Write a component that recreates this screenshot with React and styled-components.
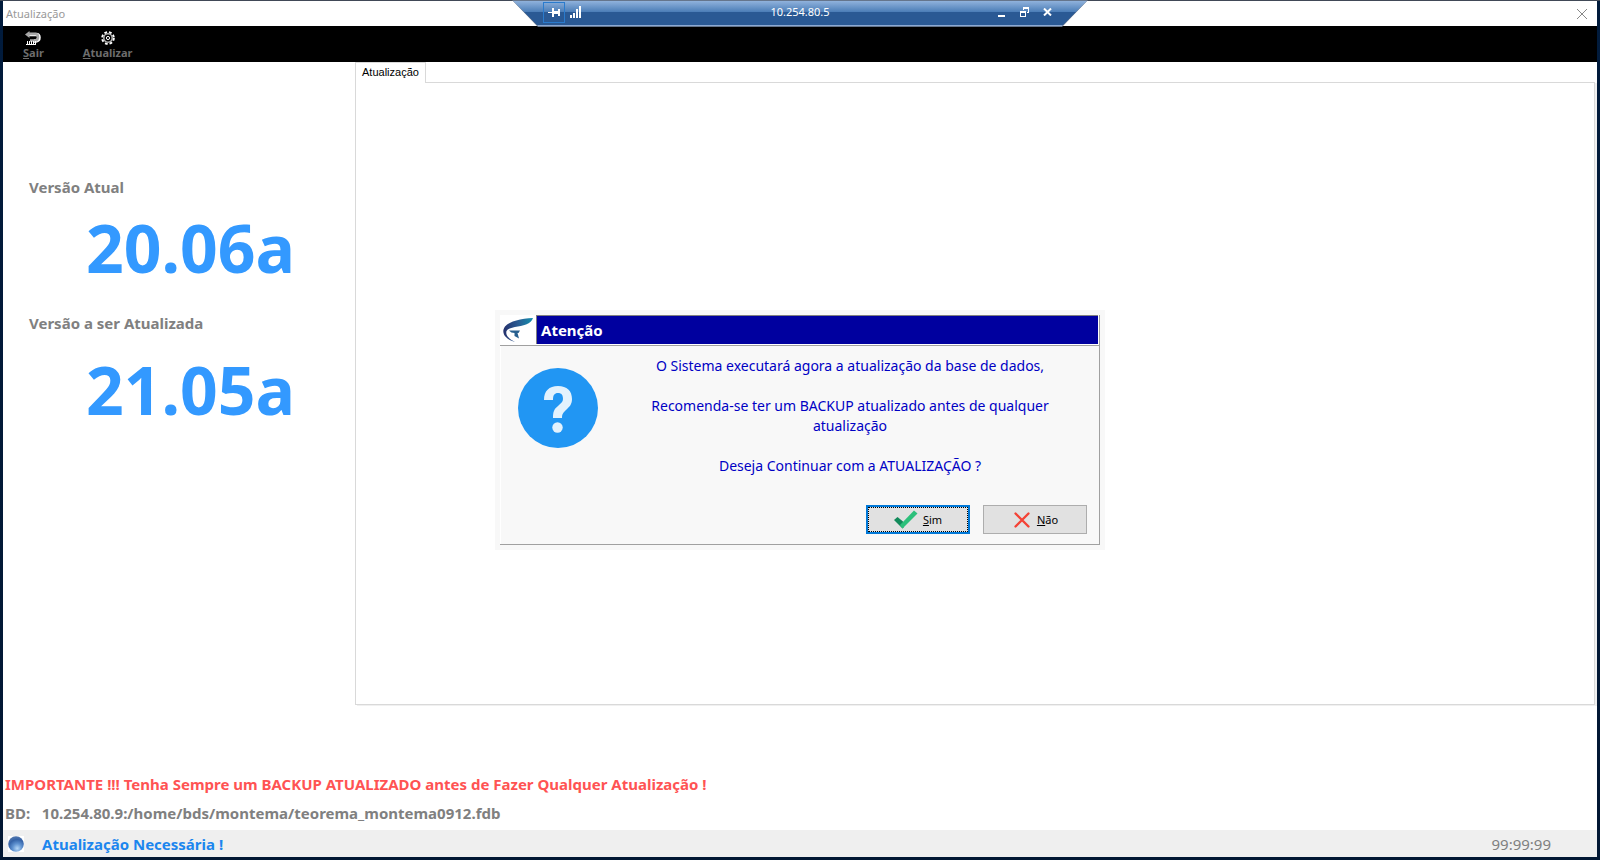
import React from 'react';
import styled, { createGlobalStyle, css } from 'styled-components';

const Global = createGlobalStyle`
  * { box-sizing: border-box; }
  body { margin: 0; background: #01183a; font-family: "Noto Sans", "Open Sans", sans-serif; }
  button { font-family: inherit; }
`;

const Desktop = styled.div`
  min-height: 100vh;
  padding: 1px 3px 3px;
  display: flex;
  background: linear-gradient(#414957 0 1px, #011b3c 1px, #021733);
`;

const Window = styled.main`
  flex: 1;
  min-width: 0;
  display: flex;
  flex-direction: column;
  background: #fff;
`;

const TitleBar = styled.header`
  height: 25px;
  padding: 0 10px 0 3px;
  display: flex;
  align-items: center;
  justify-content: space-between;
  color: #999;
`;

const WindowTitle = styled.h1`
  margin: 0;
  font-size: 11px;
  line-height: 24px;
  font-weight: 400;
`;

const IconButton = styled.button`
  border: 0;
  padding: 0;
  background: none;
  color: inherit;
  display: flex;
  align-items: center;
  justify-content: center;
`;

const Remote = styled.div`
  position: absolute;
  top: 0;
  left: 50%;
  transform: translateX(-50%);
  width: 576px;
  height: 27px;
  padding: 1px;
  background: #65758c;
  clip-path: polygon(0 0, 100% 0, calc(100% - 26px) 100%, 26px 100%);
`;

const RemoteBar = styled.div`
  height: 25px;
  padding: 0 30px 2px;
  display: grid;
  grid-template-columns: 1fr auto 1fr;
  align-items: center;
  color: #fff;
  font-size: 11px;
  line-height: 22px;
  border-bottom: 1px solid #8ba9d4;
  background: linear-gradient(#90b2dc 0, #4b7db7 11px, #2a5994 11px);
  clip-path: polygon(0 0, 100% 0, calc(100% - 25px) 100%, 25px 100%);
`;

const RemoteTools = styled.div`
  display: flex;
  align-items: center;
  justify-content: ${(p) => (p.$end ? 'flex-end' : 'flex-start')};
  gap: ${(p) => (p.$end ? '14px' : '5px')};
  padding-right: ${(p) => (p.$end ? '5px' : '0')};
`;

const PinButton = styled(IconButton)`
  width: 22px;
  height: 21px;
  border: 1px solid #2a7bcd;
`;

const ToolBar = styled.nav`
  height: 36px;
  padding: 5px 20px 0;
  display: flex;
  align-items: flex-start;
  gap: 39px;
  background: #000;
`;

const ToolButton = styled.button`
  border: 0;
  padding: 0;
  background: none;
  color: #6d6d6d;
  font-size: 11px;
  line-height: 16px;
  font-weight: 700;
  display: flex;
  flex-direction: column;
  align-items: center;
`;

const Content = styled.div`
  flex: 1;
  display: flex;
`;

const Versions = styled.section`
  width: 352px;
  flex: none;
  padding: 113px 26px 0;
`;

const VersionLabel = styled.h2`
  margin: 0;
  color: #808080;
  font-size: 15px;
  line-height: 24px;
  font-weight: 700;
`;

const VersionNumber = styled.p`
  margin: 0;
  padding: ${(p) => (p.$spaced ? '9px' : '3px')} 0 19px 57px;
  color: #3399ff;
  font-size: 66px;
  line-height: 90px;
  font-weight: 700;
`;

const Tabs = styled.section`
  flex: 1;
  min-width: 0;
  display: flex;
  flex-direction: column;
  align-items: flex-start;
`;

const Tab = styled.button`
  position: relative;
  height: 21px;
  margin-bottom: -1px;
  padding: 0 6px 2px;
  border: 1px solid #d9d9d9;
  border-bottom: 0;
  background: #fff;
  color: #000;
  font-family: "Liberation Sans", sans-serif;
  font-size: 11px;
  line-height: 18px;
`;

const TabPanel = styled.div`
  flex: 1;
  align-self: stretch;
  border: 1px solid #d9d9d9;
  box-shadow: 2px 1px 0 #f0f0f0;
  margin-right: 2px;
`;

const Notes = styled.footer`
  padding: 67px 2px 0;
  font-size: 15px;
  line-height: 24px;
  font-weight: 700;
`;

const Note = styled.p`
  margin: 0 0 5px;
  white-space: pre;
  color: ${(p) => (p.$alert ? '#ff5353' : '#808080')};
`;

const StatusBar = styled.div`
  height: 27px;
  padding: 0 46px 0 5px;
  display: flex;
  align-items: center;
  gap: 18px;
  background: #efefef;
  font-size: 15px;
  line-height: 24px;
`;

const StatusText = styled.span`
  flex: 1;
  color: #1c86ee;
  font-weight: 700;
`;

const Clock = styled.time`
  color: #808080;
`;

const Overlay = styled.div`
  position: fixed;
  inset: 0;
  display: grid;
  place-items: center;
  pointer-events: none;
`;

const Dialog = styled.section`
  pointer-events: auto;
  width: 610px;
  padding: 5px;
  background: #f8f8f8;
`;

const DialogFrame = styled.div`
  border-right: 1px solid #a0a0a0;
  border-bottom: 1px solid #a0a0a0;
`;

const DialogHead = styled.header`
  display: flex;
  border-bottom: 1px solid #a0a0a0;
  background: #fff;
`;

const LogoBox = styled.div`
  width: 36px;
  display: grid;
  place-items: center;
`;

const DialogTitle = styled.h2`
  flex: 1;
  margin: 0 1px 1px 0;
  padding: 0 4px;
  border: 1px solid #808080;
  border-width: 1px 0 0 1px;
  background: #00009f;
  color: #fff;
  font-size: 15px;
  line-height: 28px;
  font-weight: 700;
`;

const DialogBody = styled.div`
  display: flex;
  padding: 10px 17px 0;
  border-left: 1px solid #fff;
`;

const Badge = styled.div`
  padding-top: 12px;
  flex: none;
  height: 100px;
`;

const Message = styled.div`
  flex: 1;
  padding: 0 10px 0 30px;
  text-align: center;
  color: #0000c4;
  font-size: 14px;
  line-height: 20px;
`;

const Line = styled.p`
  margin: 0 0 20px;
`;

const Actions = styled.div`
  display: flex;
  justify-content: flex-end;
  gap: 13px;
  padding: 9px 12px 10px;
  border-left: 1px solid #fff;
`;

const ActionButton = styled.button`
  width: 104px;
  height: 29px;
  padding: 0;
  display: flex;
  align-items: center;
  justify-content: center;
  gap: 5px;
  border: 1px solid #adadad;
  background: #e1e1e1;
  color: #000;
  font-size: 11px;
  line-height: 16px;
  ${(p) => p.$primary && css`
    border: 2px solid #0078d7;
    outline: 1px dotted #000;
    outline-offset: -3px;
  `}
`;

const ExitIcon = () => (
  <svg width="16" height="14" viewBox="0 0 16 14" fill="none" aria-hidden="true">
    <path d="M4 3.500H11Q14 3.500 14 6.500T11 10H9" stroke="#fff" strokeWidth="3.500" />
    <path d="M4 3H10.500Q13 3 13 6T10.500 9.500H5" stroke="#a8a8a8" strokeWidth="2.600" />
    <path d="M0 3.500L4.500 0V7Z" fill="#a8a8a8" />
    <path d="M2 11.500H11" stroke="#fff" strokeWidth="3" strokeDasharray="1 1" />
    <path d="M1 13.500H11" stroke="#fff" />
  </svg>
);

const GearIcon = () => (
  <svg width="16" height="14" viewBox="0 0 16 14" fill="none" aria-hidden="true">
    <circle cx="8" cy="7" r="5.800" stroke="#fff" strokeWidth="2" strokeDasharray="2.700 1.900" />
    <circle cx="8" cy="7" r="4.200" stroke="#b0b0b0" strokeWidth="1.600" />
    <circle cx="8" cy="7" r="1.600" stroke="#fff" />
  </svg>
);

const PinIcon = () => (
  <svg width="14" height="11" viewBox="0 0 14 11" fill="#fff" aria-hidden="true">
    <path d="M1 5H5V6H1zM5 1H7V10H5zM7 4H11V7H7zM11 2H13V9H11z" />
  </svg>
);

const SignalIcon = () => (
  <svg width="12" height="12" viewBox="0 0 12 12" fill="#fff" aria-hidden="true">
    <path d="M0 9H2V12H0zM3 7H5V12H3zM6 3H8V12H6zM9 0H11V12H9z" />
  </svg>
);

const MinimizeIcon = () => (
  <svg width="9" height="10" viewBox="0 0 9 10" aria-hidden="true"><path d="M1 8H8V10H1z" fill="#fff" /></svg>
);

const RestoreIcon = () => (
  <svg width="9" height="10" viewBox="0 0 9 10" fill="#fff" aria-hidden="true">
    <path fillRule="evenodd" d="M3 0H9V6H7V5H8V2H4V3H3zM0 4H6V10H0zM1 6V9H5V6z" />
  </svg>
);

const CloseIcon = () => (
  <svg width="9" height="8" viewBox="0 0 9 8" aria-hidden="true">
    <path d="M1 .5L8 7.500M8 .5L1 7.500" stroke="#fff" strokeWidth="2" />
  </svg>
);

const ThinCloseIcon = () => (
  <svg width="10" height="10" viewBox="0 0 10 10" aria-hidden="true">
    <path d="M0 0L10 10M10 0L0 10" stroke="#888" />
  </svg>
);

const GlobeIcon = () => (
  <svg width="16" height="16" viewBox="0 0 16 16" aria-hidden="true">
    <defs>
      <radialGradient id="globe" cx=".58" cy=".78" r=".75">
        <stop offset="0" stopColor="#b4d6f7" />
        <stop offset=".4" stopColor="#5f92d0" />
        <stop offset=".75" stopColor="#3563a8" />
        <stop offset="1" stopColor="#4f75ad" />
      </radialGradient>
    </defs>
    <path d="M0 0H16V16H0z" fill="#fff" />
    <circle cx="8" cy="8" r="7.800" fill="url(#globe)" />
  </svg>
);

const Logo = () => (
  <svg width="32" height="26" viewBox="0 0 32 26" aria-hidden="true">
    <defs>
      <linearGradient id="wing">
        <stop offset="0" stopColor="#25316d" />
        <stop offset=".5" stopColor="#2b5c93" />
        <stop offset="1" stopColor="#128fae" />
      </linearGradient>
    </defs>
    <path d="M31 1C19 1.500 8 4 3 9.500C-1 15 2 22 13 25C6 21 3.500 18 4.500 14C7 9.500 18 10 24 7.500C28 6 30 4 31 1Z" fill="url(#wing)" />
    <path d="M7 13.500H18L16.500 16H15.500L17 21.500L12.500 19V16Q9 16 7 13.500Z" fill="#28608f" />
  </svg>
);

const QuestionIcon = () => (
  <svg width="80" height="80" viewBox="0 0 80 80" role="img" aria-label="Pergunta">
    <circle cx="40" cy="40" r="40" fill="#2196f3" />
    <path d="M26 32C26 23 31 18 40 18S54 23 54 31C54 37 51 39 48 42C45 45 44 46 44 50H35C35 44 36 41 40 38C43 35 45 34 45 31C45 27 43.500 25 40 25S35 27 35 32Z" fill="#e3f2fd" />
    <circle cx="39.500" cy="59.500" r="5.200" fill="#e3f2fd" />
  </svg>
);

const CheckIcon = () => (
  <svg width="24" height="20" viewBox="0 0 24 20" aria-hidden="true">
    <path d="M0 10L3.500 7L9 11.500L10 17L8.500 18.500Z" fill="#128a5b" />
    <path d="M8.500 18.500L6 15L20 .5L23.500 3.500Z" fill="#2cc07b" />
  </svg>
);

const CrossIcon = () => (
  <svg width="20" height="18" viewBox="0 0 20 18" aria-hidden="true">
    <path d="M3.500 2.500L16.500 15.500M16.500 2.500L3.500 15.500" stroke="#f44336" strokeWidth="2.400" strokeLinecap="round" />
  </svg>
);

export default function App() {
  return (
    <>
      <Global />
      <Desktop>
        <Window>
          <TitleBar>
            <WindowTitle>Atualização</WindowTitle>
            <IconButton aria-label="Fechar"><ThinCloseIcon /></IconButton>
          </TitleBar>
          <ToolBar>
            <ToolButton><ExitIcon /><span><u>S</u>air</span></ToolButton>
            <ToolButton><GearIcon /><span><u>A</u>tualizar</span></ToolButton>
          </ToolBar>
          <Content>
            <Versions>
              <VersionLabel>Versão Atual</VersionLabel>
              <VersionNumber>20.06a</VersionNumber>
              <VersionLabel>Versão a ser Atualizada</VersionLabel>
              <VersionNumber $spaced>21.05a</VersionNumber>
            </Versions>
            <Tabs>
              <Tab>Atualização</Tab>
              <TabPanel />
            </Tabs>
          </Content>
          <Notes>
            <Note $alert>IMPORTANTE !!! Tenha Sempre um BACKUP ATUALIZADO antes de Fazer Qualquer Atualização !</Note>
            <Note>{'BD:   10.254.80.9:/home/bds/montema/teorema_montema0912.fdb'}</Note>
          </Notes>
          <StatusBar>
            <GlobeIcon />
            <StatusText>Atualização Necessária !</StatusText>
            <Clock>99:99:99</Clock>
          </StatusBar>
        </Window>
      </Desktop>
      <Remote>
        <RemoteBar>
          <RemoteTools>
            <PinButton aria-label="Fixar"><PinIcon /></PinButton>
            <IconButton aria-label="Conexão"><SignalIcon /></IconButton>
          </RemoteTools>
          <span>10.254.80.5</span>
          <RemoteTools $end>
            <IconButton aria-label="Minimizar"><MinimizeIcon /></IconButton>
            <IconButton aria-label="Restaurar"><RestoreIcon /></IconButton>
            <IconButton aria-label="Fechar conexão"><CloseIcon /></IconButton>
          </RemoteTools>
        </RemoteBar>
      </Remote>
      <Overlay>
        <Dialog role="dialog" aria-labelledby="dialog-title">
          <DialogFrame>
            <DialogHead>
              <LogoBox><Logo /></LogoBox>
              <DialogTitle id="dialog-title">Atenção</DialogTitle>
            </DialogHead>
            <DialogBody>
              <Badge><QuestionIcon /></Badge>
              <Message>
                <Line>O Sistema executará agora a atualização da base de dados,</Line>
                <Line>Recomenda-se ter um BACKUP atualizado antes de qualquer atualização</Line>
                <Line>Deseja Continuar com a ATUALIZAÇÃO ?</Line>
              </Message>
            </DialogBody>
            <Actions>
              <ActionButton $primary><CheckIcon /><span><u>S</u>im</span></ActionButton>
              <ActionButton><CrossIcon /><span><u>N</u>ão</span></ActionButton>
            </Actions>
          </DialogFrame>
        </Dialog>
      </Overlay>
    </>
  );
}
